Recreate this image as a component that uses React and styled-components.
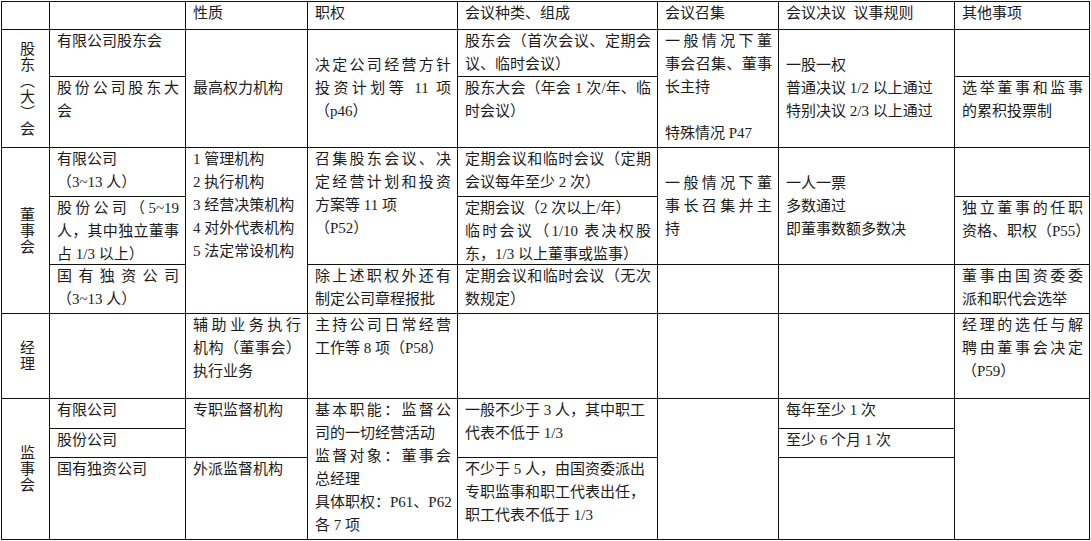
import React from 'react'
import styled, { createGlobalStyle } from 'styled-components'

const Global = createGlobalStyle`
  html, body {
    margin: 0;
    padding: 0;
    background: #fff;
  }
  body {
    font-family: "Liberation Serif", "Noto Sans CJK SC", serif;
    color: #1c1c1c;
  }
`

const Table = styled.div`
  display: grid;
  grid-template-columns: 47px 135px 121px 149px 199px 120px 175px 134px;
  grid-template-rows: 27px 46px 70px 48px 67px 48px 84px 29px 28px 81px;
  gap: 1px;
  padding: 1px;
  margin: 1px 0 0 1px;
  width: max-content;
  background: #111;
`

const Cell = styled.div`
  grid-column: ${p => p.$c} / span ${p => p.$cs || 1};
  grid-row: ${p => p.$r} / span ${p => p.$rs || 1};
  background: #fff;
  padding: 0 6px 0 7px;
  font-size: 15px;
  line-height: 23px;
  display: flex;
  flex-direction: column;
  justify-content: ${p => (p.$middle ? 'center' : 'flex-start')};
  overflow: hidden;
`

const Line = styled.div`
  white-space: nowrap;
  min-height: 23px;
  text-align: ${p => (p.$fill ? 'justify' : 'left')};
  text-align-last: ${p => (p.$fill ? 'justify' : 'left')};
`

const Side = styled.div`
  grid-column: 1;
  grid-row: ${p => p.$r} / span ${p => p.$rs || 1};
  background: #fff;
  display: flex;
  align-items: center;
  justify-content: center;
`

const SideText = styled.span`
  writing-mode: vertical-rl;
  font-size: 15px;
  line-height: 15px;
  letter-spacing: 1px;
`

const T = ({ lines }) =>
  lines.map((l, i) =>
    typeof l === 'string' ? (
      <Line key={i}>{l}</Line>
    ) : (
      <Line key={i} $fill>{l.t}</Line>
    )
  )

const f = t => ({ t })

const headers = ['', '', '性质', '职权', '会议种类、组成', '会议召集', '会议决议\u00a0\u00a0议事规则', '其他事项']

const cells = [
  // 股东（大）会
  { c: 2, r: 2, lines: ['有限公司股东会'] },
  { c: 2, r: 3, lines: [f('股份公司股东大'), '会'] },
  { c: 3, r: 2, rs: 2, middle: true, lines: ['最高权力机构'] },
  { c: 4, r: 2, rs: 2, middle: true, lines: [f('决定公司经营方针'), f('投资计划等 11 项'), '（p46）'] },
  { c: 5, r: 2, lines: [f('股东会（首次会议、定期会'), '议、临时会议）'] },
  { c: 5, r: 3, lines: [f('股东大会（年会 1 次/年、临'), '时会议）'] },
  { c: 6, r: 2, rs: 2, lines: [f('一般情况下董'), f('事会召集、董事'), '长主持', '', '特殊情况 P47'] },
  { c: 7, r: 2, rs: 2, middle: true, lines: ['一股一权', '普通决议 1/2 以上通过', '特别决议 2/3 以上通过'] },
  { c: 8, r: 2, lines: [] },
  { c: 8, r: 3, lines: [f('选举董事和监事'), '的累积投票制'] },
  // 董事会
  { c: 2, r: 4, lines: ['有限公司', '（3~13 人）'] },
  { c: 2, r: 5, lines: [f('股份公司（5~19'), f('人，其中独立董事'), '占 1/3 以上）'] },
  { c: 2, r: 6, lines: [f('国有独资公司'), '（3~13 人）'] },
  { c: 3, r: 4, rs: 3, lines: ['1 管理机构', '2 执行机构', '3 经营决策机构', '4 对外代表机构', '5 法定常设机构'] },
  { c: 4, r: 4, rs: 2, lines: [f('召集股东会议、决'), f('定经营计划和投资'), '方案等 11 项', '（P52）'] },
  { c: 4, r: 6, lines: [f('除上述职权外还有'), '制定公司章程报批'] },
  { c: 5, r: 4, lines: [f('定期会议和临时会议（定期'), '会议每年至少 2 次）'] },
  { c: 5, r: 5, lines: ['定期会议（2 次以上/年）', f('临时会议（1/10 表决权股'), '东，1/3 以上董事或监事）'] },
  { c: 5, r: 6, lines: [f('定期会议和临时会议（无次'), '数规定）'] },
  { c: 6, r: 4, rs: 2, middle: true, lines: [f('一般情况下董'), f('事长召集并主'), '持'] },
  { c: 6, r: 6, lines: [] },
  { c: 7, r: 4, rs: 2, middle: true, lines: ['一人一票', '多数通过', '即董事数额多数决'] },
  { c: 7, r: 6, lines: [] },
  { c: 8, r: 4, lines: [] },
  { c: 8, r: 5, lines: [f('独立董事的任职'), '资格、职权（P55）'] },
  { c: 8, r: 6, lines: [f('董事由国资委委'), '派和职代会选举'] },
  // 经理
  { c: 2, r: 7, lines: [] },
  { c: 3, r: 7, lines: [f('辅助业务执行'), f('机构（董事会）'), '执行业务'] },
  { c: 4, r: 7, lines: [f('主持公司日常经营'), '工作等 8 项（P58）'] },
  { c: 5, r: 7, lines: [] },
  { c: 6, r: 7, lines: [] },
  { c: 7, r: 7, lines: [] },
  { c: 8, r: 7, lines: [f('经理的选任与解'), f('聘由董事会决定'), '（P59）'] },
  // 监事会
  { c: 2, r: 8, lines: ['有限公司'] },
  { c: 2, r: 9, lines: ['股份公司'] },
  { c: 2, r: 10, lines: ['国有独资公司'] },
  { c: 3, r: 8, rs: 2, lines: ['专职监督机构'] },
  { c: 3, r: 10, lines: ['外派监督机构'] },
  { c: 4, r: 8, rs: 3, lines: [f('基本职能：监督公'), '司的一切经营活动', f('监督对象：董事会'), '总经理', '具体职权：P61、P62', '各 7 项'] },
  { c: 5, r: 8, rs: 2, lines: ['一般不少于 3 人，其中职工', '代表不低于 1/3'] },
  { c: 5, r: 10, lines: ['不少于 5 人，由国资委派出', '专职监事和职工代表出任，', '职工代表不低于 1/3'] },
  { c: 6, r: 8, rs: 3, lines: [] },
  { c: 7, r: 8, lines: ['每年至少 1 次'] },
  { c: 7, r: 9, lines: ['至少 6 个月 1 次'] },
  { c: 7, r: 10, lines: [] },
  { c: 8, r: 8, rs: 3, lines: [] },
]

const sides = [
  { r: 2, rs: 2, t: '股东（大）会' },
  { r: 4, rs: 3, t: '董事会' },
  { r: 7, rs: 1, t: '经理' },
  { r: 8, rs: 3, t: '监事会' },
]

const App = () => {
  return (
    <>
      <Global />
      <Table>
        {headers.map((h, i) => (
          <Cell key={'h' + i} $c={i + 1} $r={1}>
            <Line>{h}</Line>
          </Cell>
        ))}
        {sides.map(s => (
          <Side key={s.t} $r={s.r} $rs={s.rs}>
            <SideText>{s.t}</SideText>
          </Side>
        ))}
        {cells.map((c, i) => (
          <Cell key={i} $c={c.c} $r={c.r} $rs={c.rs} $middle={c.middle}>
            <T lines={c.lines} />
          </Cell>
        ))}
      </Table>
    </>
  )
}

export default App
